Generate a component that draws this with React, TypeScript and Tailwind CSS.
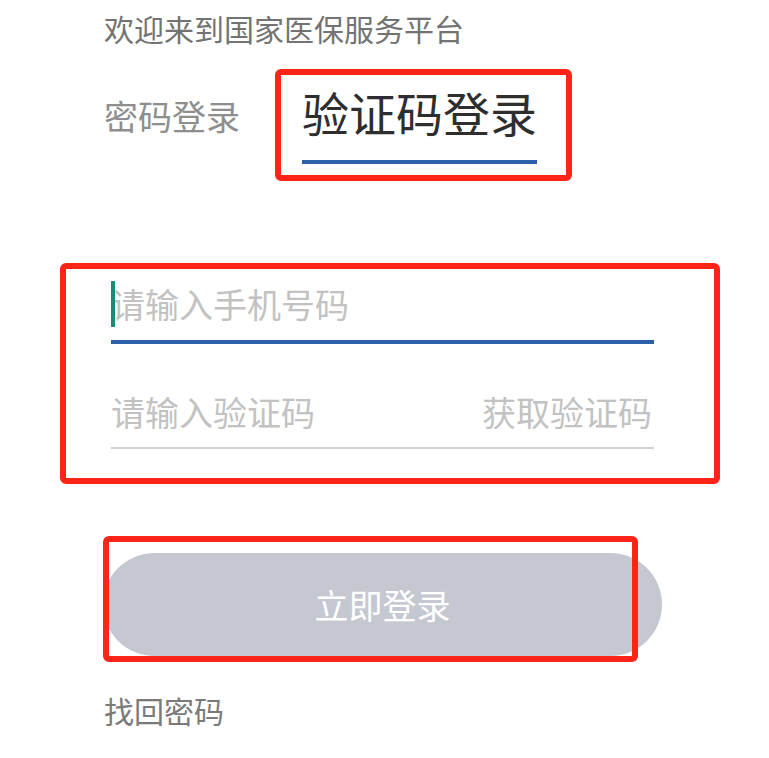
import React from "react";

export default function App() {
  const font = { fontFamily: '"Noto Sans CJK SC", "Noto Sans", sans-serif' };
  return (
    <div className="relative w-[769px] h-[758px] bg-white overflow-hidden" style={font}>
      <div className="flex flex-col pl-[104px] pt-[13px]">
        <div className="text-[30px] leading-[30px] text-[#737373]">欢迎来到国家医保服务平台</div>

        <div className="flex items-start mt-[45px]">
          <div className="mt-[11px] text-[34px] leading-[34px] text-[#8e8e8e] w-[136px]">密码登录</div>
          <div className="ml-[62px] flex flex-col w-[235px]">
            <div className="text-[47px] leading-[47px] text-[#2e2e2e] whitespace-nowrap">验证码登录</div>
            <div className="mt-[25px] h-[4px] bg-[#2a5fa9]" />
          </div>
        </div>

        <div className="ml-[7px] w-[543px] flex flex-col mt-[117px]">
          <div className="relative h-[46px] flex items-center">
            <div className="absolute left-0 top-0 h-[46px] w-[4px] bg-[#1b8a78]" />
            <span className="text-[34px] leading-[34px] text-[#c2c2c2]">请输入手机号码</span>
          </div>
          <div className="mt-[13px] h-[4px] bg-[#2a5fa9]" />

          <div className="mt-[51px] flex items-center justify-between">
            <span className="text-[34px] leading-[34px] text-[#c2c2c2]">请输入验证码</span>
            <span className="text-[34px] leading-[34px] text-[#c2c2c2] mr-[2px]">获取验证码</span>
          </div>
          <div className="mt-[18px] h-[2px] bg-[#d2d2d2]" />
        </div>

        <button className="-ml-[1px] mt-[104px] w-[559px] h-[103px] rounded-full bg-[#c5c8d1] flex items-center justify-center text-white text-[34px] leading-[34px]">
          立即登录
        </button>

        <div className="mt-[39px] text-[30px] leading-[30px] text-[#7a7a7a]">找回密码</div>
      </div>

      <div className="absolute left-[275px] top-[69px] w-[297px] h-[112px] border-[6px] border-[#ff2418] rounded-[6px]" />
      <div className="absolute left-[60px] top-[263px] w-[660px] h-[221px] border-[6px] border-[#ff2418] rounded-[6px]" />
      <div className="absolute left-[103px] top-[536px] w-[535px] h-[126px] border-[6px] border-[#ff2418] rounded-[6px]" />
    </div>
  );
}
